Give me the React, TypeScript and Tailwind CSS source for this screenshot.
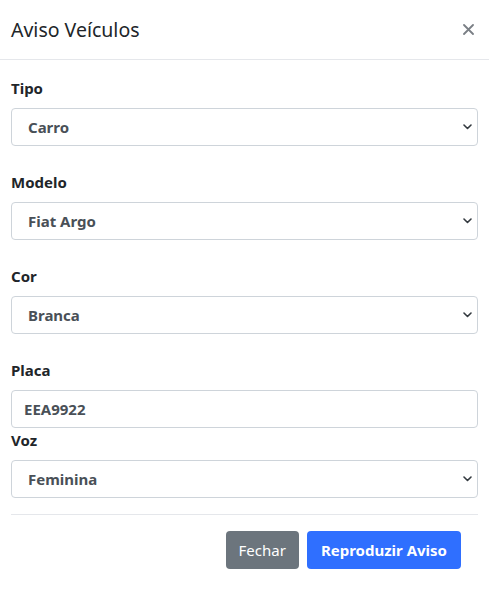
import React, { useState } from 'react';

const font = { fontFamily: '"Noto Sans", "Open Sans", sans-serif' };

const Chevron = () => (
  <svg className="pointer-events-none absolute right-[6px] top-1/2 -translate-y-1/2" width="9" height="6" viewBox="0 0 9 6" fill="none">
    <path d="M1 1l3.5 3.5L8 1" stroke="#343a40" strokeWidth="1.6" strokeLinecap="round" strokeLinejoin="round" />
  </svg>
);

interface SelectFieldProps {
  label: string;
  value: string;
  options: string[];
  onChange: (v: string) => void;
  className?: string;
}

const SelectField: React.FC<SelectFieldProps> = ({ label, value, options, onChange, className }) => (
  <div className={className}>
    <label className="block h-[22px] text-[15px] leading-[22px] font-bold text-[#212529]">{label}</label>
    <div className="relative mt-[9px]">
      <select
        value={value}
        onChange={(e) => onChange(e.target.value)}
        className="block h-[38px] w-full appearance-none rounded-[4px] border border-[#ced4da] bg-white pl-[16px] pr-8 text-[15px] font-bold text-[#495057] outline-none"
        style={font}
      >
        {options.map((o) => (
          <option key={o}>{o}</option>
        ))}
      </select>
      <Chevron />
    </div>
  </div>
);

export default function App() {
  const [tipo, setTipo] = useState('Carro');
  const [modelo, setModelo] = useState('Fiat Argo');
  const [cor, setCor] = useState('Branca');
  const [placa, setPlaca] = useState('EEA9922');
  const [voz, setVoz] = useState('Feminina');

  return (
    <div className="min-h-[597px] w-[489px] bg-white" style={font}>
      <div className="flex h-[60px] items-center justify-between border-b border-[#e5e7eb] pl-[11px] pr-[11px]">
        <h5 className="text-[19.5px] font-normal text-[#212529]">Aviso Veículos</h5>
        <button className="flex h-5 w-5 items-center justify-center" aria-label="Fechar">
          <svg width="11" height="11" viewBox="0 0 11 11">
            <path d="M1 1l9 9M10 1l-9 9" stroke="#7a7f85" strokeWidth="1.8" strokeLinecap="round" />
          </svg>
        </button>
      </div>

      <div className="px-[11px] pt-[17px]">
        <SelectField label="Tipo" value={tipo} options={['Carro', 'Moto', 'Caminhão']} onChange={setTipo} />
        <SelectField label="Modelo" value={modelo} options={['Fiat Argo', 'Fiat Uno', 'VW Gol']} onChange={setModelo} className="mt-[25px]" />
        <SelectField label="Cor" value={cor} options={['Branca', 'Preta', 'Prata']} onChange={setCor} className="mt-[25px]" />

        <div className="mt-[25px]">
          <label className="block h-[22px] text-[15px] leading-[22px] font-bold text-[#212529]">Placa</label>
          <input
            value={placa}
            onChange={(e) => setPlaca(e.target.value)}
            className="mt-[9px] block h-[38px] w-full rounded-[4px] border border-[#ced4da] bg-white pl-[12px] text-[15px] font-bold text-[#495057] outline-none"
            style={font}
          />
        </div>
        <SelectField label="Voz" value={voz} options={['Feminina', 'Masculina']} onChange={setVoz} className="mt-[1px]" />

        <div className="mt-[16px] border-t border-[#e5e7eb]" />
        <div className="flex justify-end gap-[8px] pr-[17px] pt-[16px]">
          <button className="h-[38px] rounded-[4px] bg-[#6c757d] px-[13px] text-[15px] text-white">Fechar</button>
          <button className="h-[38px] rounded-[4px] bg-[#2f6fff] px-[14px] text-[15px] font-bold text-white">Reproduzir Aviso</button>
        </div>
      </div>
    </div>
  );
}
